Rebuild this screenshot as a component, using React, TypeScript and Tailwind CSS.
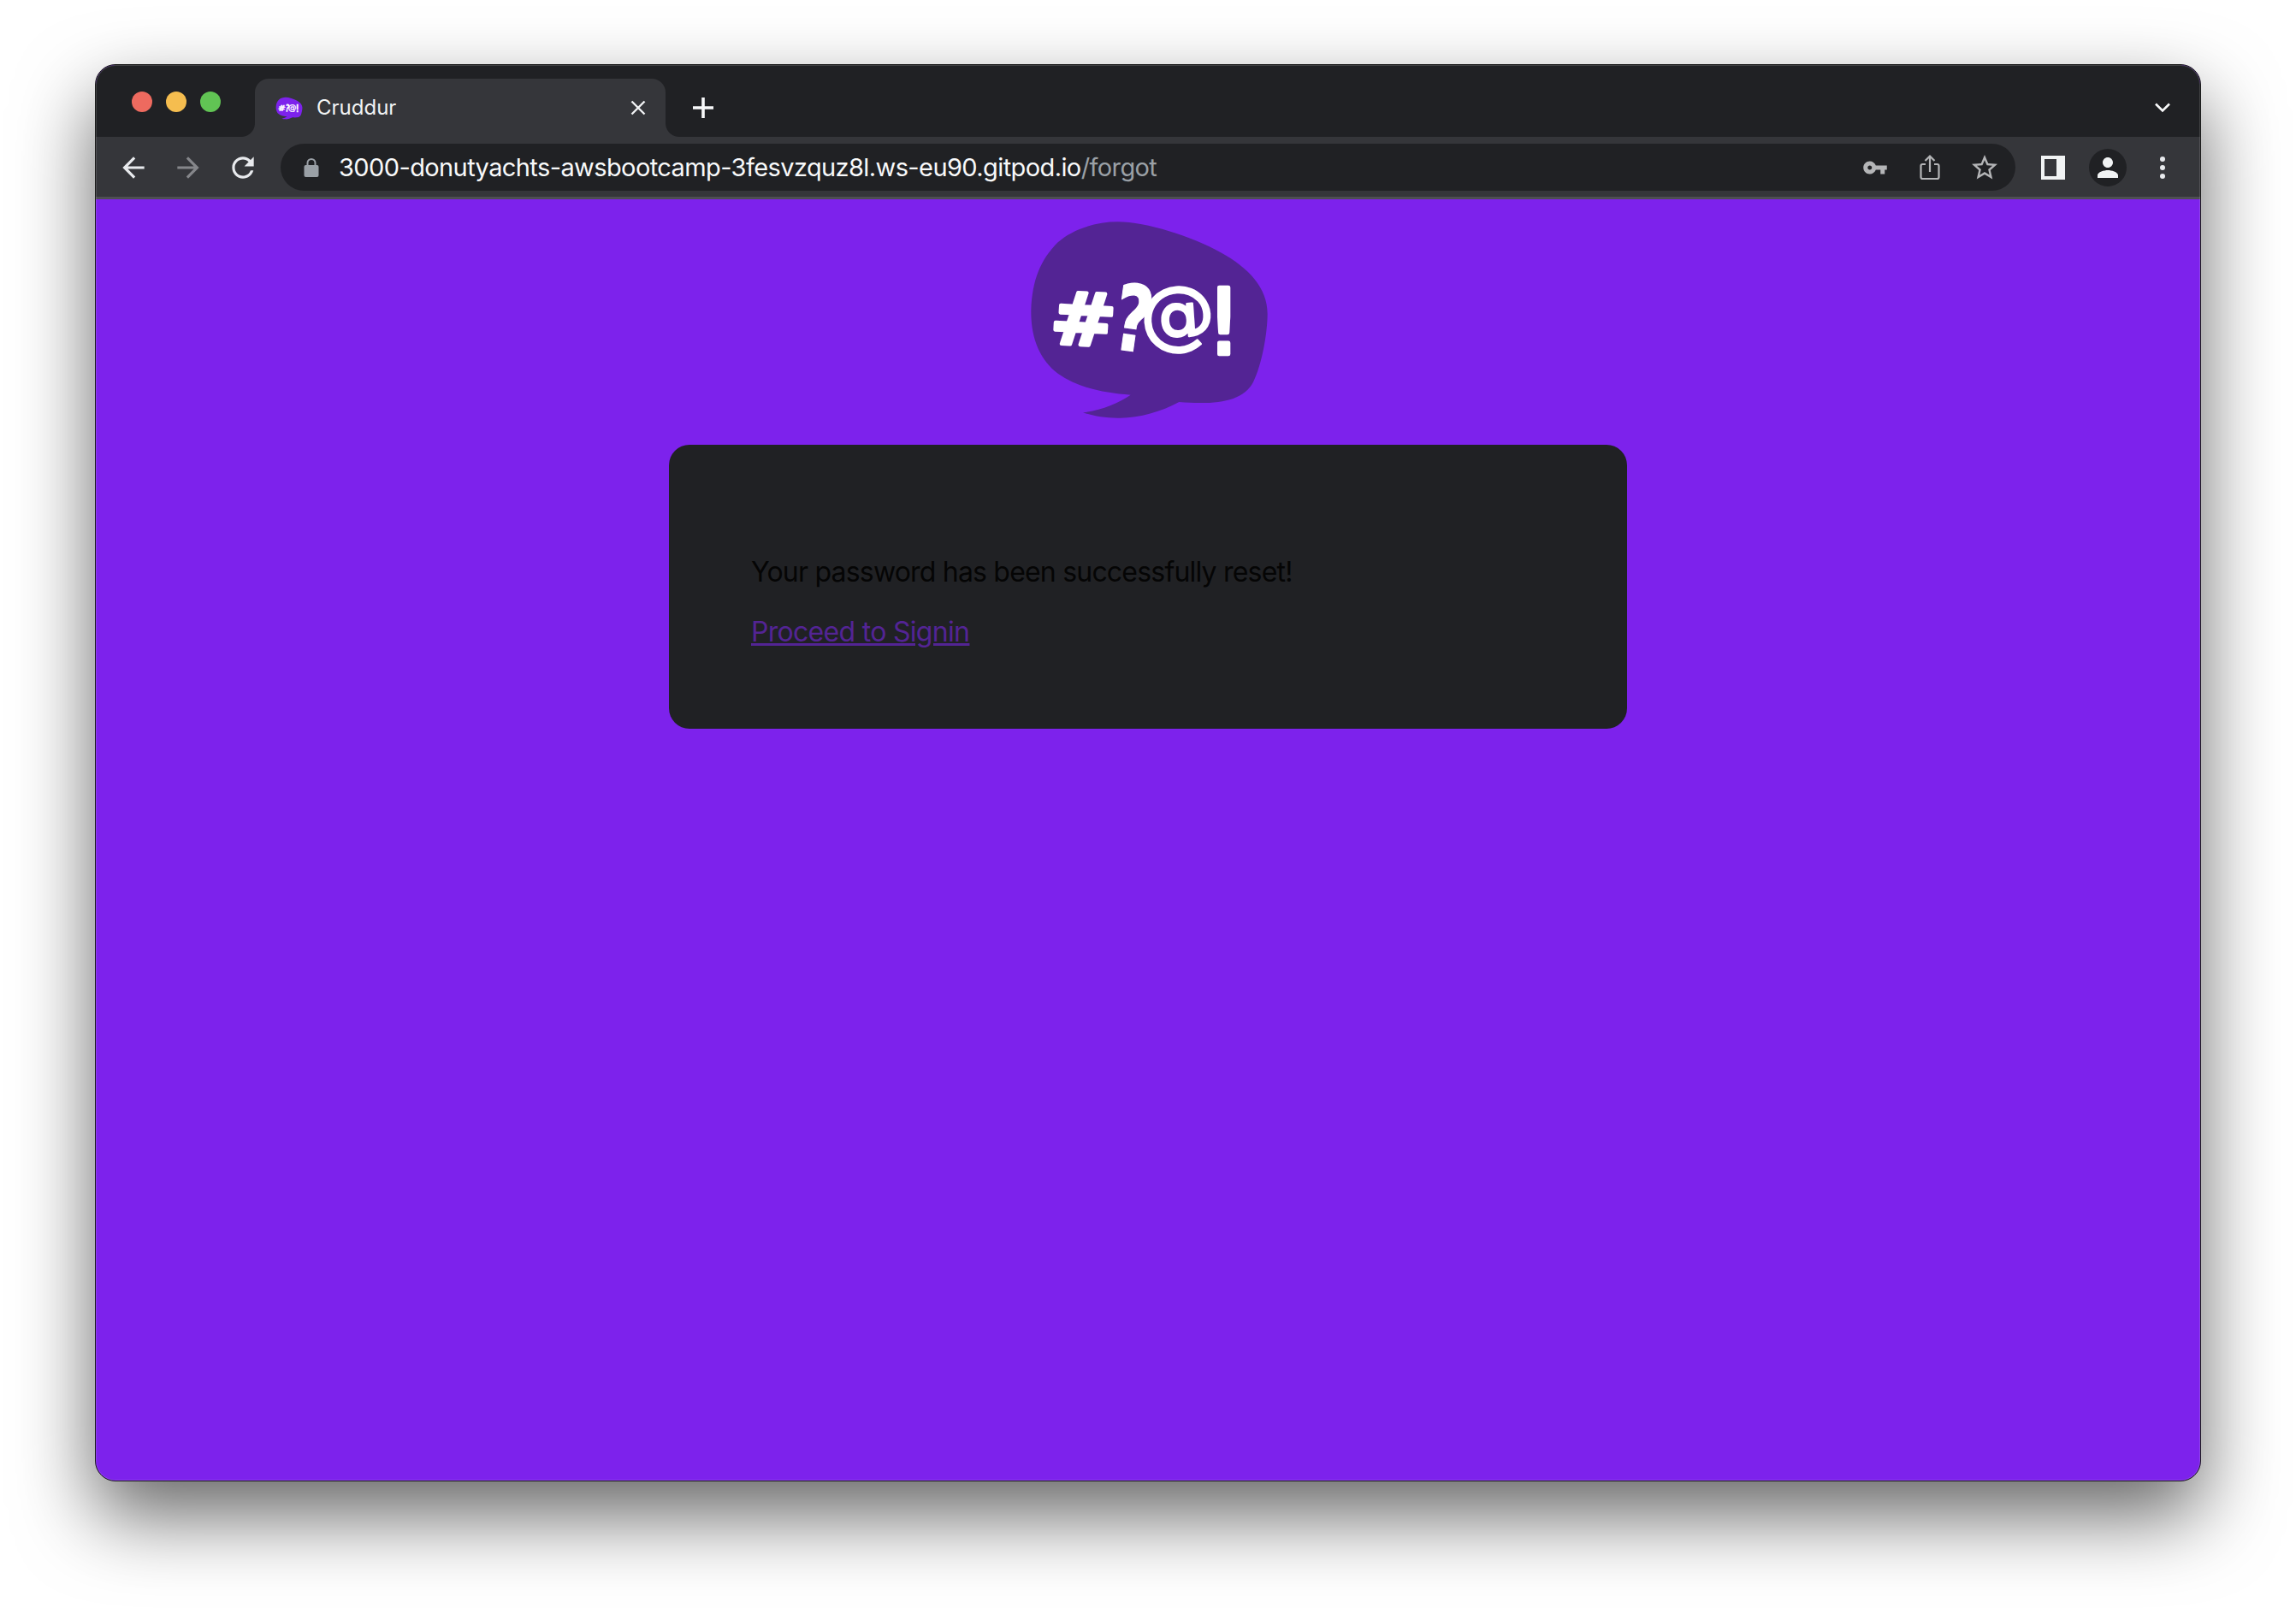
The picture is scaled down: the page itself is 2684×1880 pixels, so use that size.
const BLOB =
  "M380 58 C 480 58, 640 110, 740 165 C 840 220, 905 290, 905 380 C 905 450, 885 560, 855 620 C 820 690, 720 700, 595 690 C 530 725, 450 748, 380 746 C 330 746, 290 738, 258 727 C 320 720, 380 695, 425 665 C 330 658, 240 640, 170 590 C 110 545, 75 470, 76 370 C 80 260, 110 190, 170 130 C 220 85, 300 58, 380 58 Z";

function Logo({ fill, viewBox, className }: { fill: string; viewBox: string; className: string }) {
  return (
    <svg viewBox={viewBox} fill="none" className={className}>
      <path d={BLOB} fill={fill} />
      <g fill="#fff" stroke="#fff" strokeLinejoin="round" textAnchor="middle" className="font-['DejaVu_Sans',sans-serif]">
        <text fontSize="255" fontWeight="700" strokeWidth="12" transform="translate(255 490) rotate(3) scale(1.08 1)">#</text>
        <text fontSize="320" fontWeight="700" strokeWidth="4" transform="translate(420 510) rotate(8) scale(.72 1)">?</text>
        <text x="590" y="472" fontSize="262" strokeWidth="8" transform="rotate(-4 590 400)">@</text>
        <text x="752" y="522" fontSize="320" strokeWidth="14">!</text>
      </g>
    </svg>
  );
}

function Glyph({ d, className }: { d: string; className: string }) {
  return (
    <svg viewBox="0 0 24 24" fill="currentColor" className={className}>
      <path d={d} />
    </svg>
  );
}

function Slot({ children }: { children: React.ReactNode }) {
  return <div className="w-[64px] h-[55px] flex items-center justify-center shrink-0">{children}</div>;
}

function TabBar() {
  return (
    <div className="h-[84px] bg-[#202124] flex items-end shrink-0">
      {/* Traffic lights */}
      <div className="w-[186px] self-start flex gap-[16px] pl-[42px] pt-[31px] shrink-0">
        <span className="w-[24px] h-[24px] rounded-full bg-[#ee6a5f]" />
        <span className="w-[24px] h-[24px] rounded-full bg-[#f5bd4f]" />
        <span className="w-[24px] h-[24px] rounded-full bg-[#61c454]" />
      </div>

      {/* Active tab */}
      <div className="relative w-[480px] h-[68px] bg-[#35363a] rounded-t-[16px] flex items-center pl-[24px] pr-[22px] shrink-0">
        <span className="absolute left-[-16px] bottom-0 w-[16px] h-[16px] bg-[radial-gradient(circle_at_0_0,#202124_15.5px,#35363a_16.5px)]" />
        <span className="absolute right-[-16px] bottom-0 w-[16px] h-[16px] bg-[radial-gradient(circle_at_100%_0,#202124_15.5px,#35363a_16.5px)]" />
        <Logo fill="#7d22ec" viewBox="60 40 860 720" className="w-[32px] h-[27px] shrink-0" />
        <span className="ml-[16px] text-[24px] text-[#f1f3f4] font-['Inter',sans-serif]">Cruddur</span>
        <svg viewBox="0 0 20 20" stroke="#f1f3f4" strokeWidth="2.4" className="ml-auto w-[20px] h-[20px]">
          <path d="M2.5 2.5l15 15M17.5 2.5l-15 15" />
        </svg>
      </div>

      {/* New tab */}
      <div className="self-stretch flex items-center pt-[16px] ml-[32px]">
        <svg viewBox="0 0 24 24" stroke="#f8f9fa" strokeWidth="3.6" className="w-[24px] h-[24px]">
          <path d="M12 0v24M0 12h24" />
        </svg>
      </div>

      {/* Tab list chevron */}
      <div className="ml-auto self-stretch flex items-center pt-[16px] pr-[35px]">
        <svg viewBox="0 0 18 12" fill="none" stroke="#f8f9fa" strokeWidth="2.6" className="w-[18px] h-[12px]">
          <path d="M1 1.5l8 8 8-8" />
        </svg>
      </div>
    </div>
  );
}

function Toolbar() {
  return (
    <div className="h-[73px] bg-[#35363a] border-b-[3px] border-[#4e4f53] flex items-start pt-[8px] pl-[12px] shrink-0">
      <Slot>
        <Glyph d="M20 11H7.83l5.59-5.59L12 4l-8 8 8 8 1.41-1.41L7.83 13H20v-2z" className="w-[38px] h-[38px] text-[#e8eaed]" />
      </Slot>
      <Slot>
        <Glyph d="M12 4l-1.41 1.41L16.17 11H4v2h12.17l-5.58 5.59L12 20l8-8z" className="w-[38px] h-[38px] text-[#85868a]" />
      </Slot>
      <Slot>
        <Glyph
          d="M17.65 6.35C16.2 4.9 14.21 4 12 4c-4.42 0-7.99 3.58-7.99 8s3.57 8 7.99 8c3.73 0 6.84-2.55 7.73-6h-2.08c-.82 2.33-3.04 4-5.65 4-3.31 0-6-2.69-6-6s2.69-6 6-6c1.66 0 3.14.69 4.22 1.78L13 11h7V4l-2.35 2.35z"
          className="w-[38px] h-[38px] text-[#e8eaed]"
        />
      </Slot>

      {/* Omnibox */}
      <div className="ml-[12px] w-[2028px] h-[55px] rounded-full bg-[#202124] flex items-center pl-[27px] pr-[4px] shrink-0">
        <svg viewBox="0 0 18 24" className="w-[18px] h-[24px] shrink-0 text-[#9aa0a6]">
          <path d="M4.5 10V6.5a4.5 4.5 0 019 0V10" fill="none" stroke="currentColor" strokeWidth="2" />
          <rect x="0.5" y="9" width="17" height="14" rx="2" fill="currentColor" />
        </svg>
        <span className="ml-[23px] text-[29px] tracking-[-0.6px] whitespace-nowrap font-['Inter',sans-serif] text-[#f8f9fa]">
          3000-donutyachts-awsbootcamp-3fesvzquz8l.ws-eu90.gitpod.io
          <span className="text-[#9aa0a6]">/forgot</span>
        </span>
        <div className="ml-auto flex">
          <Slot>
            <Glyph
              d="M12.65 10C11.83 7.67 9.61 6 7 6c-3.31 0-6 2.69-6 6s2.69 6 6 6c2.61 0 4.83-1.67 5.65-4H17v4h4v-4h2v-4H12.65zM7 14c-1.1 0-2-.9-2-2s.9-2 2-2 2 .9 2 2-.9 2-2 2z"
              className="w-[30px] h-[30px] text-[#b4b5b7]"
            />
          </Slot>
          <Slot>
            <svg viewBox="0 0 24 32" fill="none" stroke="#b4b5b7" strokeWidth="2.2" className="w-[24px] h-[32px]">
              <path d="M7 12H3.5a2 2 0 00-2 2v13a2 2 0 002 2h17a2 2 0 002-2V14a2 2 0 00-2-2H17" />
              <path d="M12 21V3M6.5 8L12 2.5 17.5 8" />
            </svg>
          </Slot>
          <Slot>
            <Glyph
              d="M22 9.24l-7.19-.62L12 2 9.19 8.63 2 9.24l5.46 4.73L5.82 21 12 17.27 18.18 21l-1.63-7.03L22 9.24zM12 15.4l-3.76 2.27 1-4.28-3.32-2.88 4.38-.38L12 6.1l1.71 4.04 4.38.38-3.32 2.88 1 4.28L12 15.4z"
              className="w-[36px] h-[36px] text-[#b4b5b7]"
            />
          </Slot>
        </div>
      </div>

      {/* Side panel, profile, menu */}
      <div className="ml-[12px] flex">
        <Slot>
          <div className="w-[28px] h-[28px] bg-[#f1f3f4] pl-[4px] py-[4px]">
            <div className="w-[14px] h-[20px] bg-[#35363a]" />
          </div>
        </Slot>
        <Slot>
          <div className="w-[44px] h-[44px] rounded-full bg-[#202124] flex items-center justify-center">
            <Glyph
              d="M12 12c2.21 0 4-1.79 4-4s-1.79-4-4-4-4 1.79-4 4 1.79 4 4 4zm0 2c-2.67 0-8 1.34-8 4v2h16v-2c0-2.66-5.33-4-8-4z"
              className="w-[36px] h-[36px] text-[#f1f3f4]"
            />
          </div>
        </Slot>
        <Slot>
          <div className="flex flex-col gap-[4px]">
            <span className="w-[6px] h-[6px] rounded-full bg-[#e8eaed]" />
            <span className="w-[6px] h-[6px] rounded-full bg-[#e8eaed]" />
            <span className="w-[6px] h-[6px] rounded-full bg-[#e8eaed]" />
          </div>
        </Slot>
      </div>
    </div>
  );
}

export default function App() {
  return (
    <div className="w-[2684px] h-[1880px] bg-white pl-[111px] pt-[75px] overflow-hidden">
      <div className="relative w-[2462px] h-[1657px] rounded-[24px] border border-[#1a1a1a] bg-[#7d22ec] overflow-hidden shadow-[0_40px_90px_rgba(0,0,0,0.6)] flex flex-col">
        <TabBar />
        <Toolbar />

        {/* Page */}
        <div className="flex-1 flex flex-col items-center font-['Inter',sans-serif]">
          <div className="pt-[7px] pb-[20px] pr-[4px]">
            <Logo fill="#532494" viewBox="0 0 960 780" className="w-[320px] h-[260px]" />
          </div>
          <div className="w-[1120px] h-[332px] rounded-[24px] bg-[#202124] px-[96px] pt-[125px]">
            <p className="text-[32px] tracking-[-0.8px] leading-[48px] text-[#050505]">Your password has been successfully reset!</p>
            <p className="mt-[22px] text-[32px] tracking-[-0.7px] leading-[48px] text-[#532494] underline">
              <a href="#signin">Proceed to Signin</a>
            </p>
          </div>
        </div>

        {/* Inner window highlight */}
        <div className="absolute inset-0 rounded-[23px] border border-white/15 pointer-events-none" />
      </div>
    </div>
  );
}
